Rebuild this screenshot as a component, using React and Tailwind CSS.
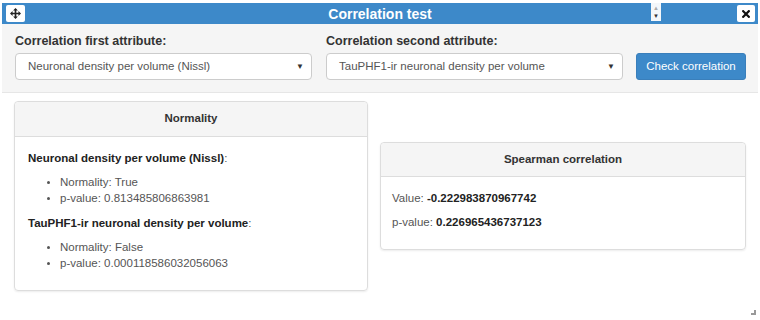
import React from "react";

const normality = [
  {
    name: "Neuronal density per volume (Nissl)",
    normal: "True",
    p: "0.813485806863981",
  },
  {
    name: "TauPHF1-ir neuronal density per volume",
    normal: "False",
    p: "0.000118586032056063",
  },
];

// Small four-way arrow (drag handle)
function MoveIcon() {
  return (
    <svg width="11" height="11" viewBox="0 0 12 12" fill="#222">
      <path d="M6 0 L8.6 2.8 H6.9 V5.1 H9.2 V3.4 L12 6 L9.2 8.6 V6.9 H6.9 V9.2 H8.6 L6 12 L3.4 9.2 H5.1 V6.9 H2.8 V8.6 L0 6 L2.8 3.4 V5.1 H5.1 V2.8 H3.4 Z" />
    </svg>
  );
}

function CloseIcon() {
  return (
    <svg width="8" height="8" viewBox="0 0 10 10">
      <path d="M1.5 1.5 L8.5 8.5 M8.5 1.5 L1.5 8.5" stroke="#111" strokeWidth="2.8" strokeLinecap="square" />
    </svg>
  );
}

function SelectBox({ value }) {
  return (
    <div className="h-[27px] flex items-center justify-between bg-white border border-[#ccc] rounded-[4px] pl-[12px] pr-[7px] text-[11.5px] text-[#555]">
      <span>{value}</span>
      <span className="text-[8px] text-[#333]">▼</span>
    </div>
  );
}

export default function App() {
  return (
    <div className="w-[760px] h-[320px] bg-white relative font-['Liberation_Sans',Arial,sans-serif] overflow-hidden">
      <div className="mx-[2px] pt-[3px]">
        {/* Title bar */}
        <div className="h-[21px] bg-[#3d89c9] relative flex items-center justify-center">
          <div className="absolute left-[4px] top-[2px] w-[19px] h-[17px] bg-white rounded-[2px] flex items-center justify-center">
            <MoveIcon />
          </div>
          <span className="text-white font-bold text-[14px] leading-none">Correlation test</span>
          <div className="absolute left-[649px] top-[0px] w-[10px] h-[18px] bg-[#f4f7fa] flex flex-col items-center justify-center gap-[2px]">
            <span className="text-[6px] leading-none text-[#aaa]">▲</span>
            <span className="text-[6px] leading-none text-[#333]">▼</span>
          </div>
          <div className="absolute right-[3px] top-[2px] w-[18px] h-[17px] bg-white rounded-[2px] flex items-center justify-center">
            <CloseIcon />
          </div>
        </div>

        {/* Attribute form */}
        <div className="bg-[#f5f5f5] border-b border-[#e6e6e6] pl-[13px] pr-[11px] pt-[10px] pb-[12px] flex items-end">
          <div className="w-[297px]">
            <div className="text-[12.5px] leading-[14px] font-bold text-[#333] mb-[5px]">Correlation first attribute:</div>
            <SelectBox value="Neuronal density per volume (Nissl)" />
          </div>
          <div className="w-[297px] ml-[14px]">
            <div className="text-[12.5px] leading-[14px] font-bold text-[#333] mb-[5px]">Correlation second attribute:</div>
            <SelectBox value="TauPHF1-ir neuronal density per volume" />
          </div>
          <button className="ml-[13px] w-[110px] h-[27px] bg-[#3d89c9] border border-[#3a7fbb] rounded-[3px] text-white text-[11.5px]">
            Check correlation
          </button>
        </div>
      </div>

      {/* Results */}
      <div className="flex items-center pl-[14px] pt-[8px]">
        <div className="w-[354px] border border-[#ddd] rounded-[4px] shadow-[0_1px_2px_rgba(0,0,0,0.08)] text-[11.5px]">
          <div className="h-[35px] bg-[#f5f5f5] border-b border-[#ddd] rounded-t-[4px] flex items-center justify-center font-bold text-[#333]">
            Normality
          </div>
          <div className="pl-[13px] pt-[14px] pb-[19px]">
            {normality.map((item, i) => (
              <div key={item.name} className={i > 0 ? "mt-[10px]" : ""}>
                <div className="leading-[14px] text-[#555]">
                  <span className="font-bold text-[#222]">{item.name}</span>:
                </div>
                <ul className="mt-[9px] pl-[32px] list-disc text-[#555] leading-[16px] marker:text-[10px]">
                  <li>Normality: {item.normal}</li>
                  <li>p-value: {item.p}</li>
                </ul>
              </div>
            ))}
          </div>
        </div>

        <div className="ml-[12px] w-[366px] border border-[#ddd] rounded-[4px] shadow-[0_1px_2px_rgba(0,0,0,0.08)] text-[11.5px]">
          <div className="h-[34px] bg-[#f5f5f5] border-b border-[#ddd] rounded-t-[4px] flex items-center justify-center font-bold text-[#333]">
            Spearman correlation
          </div>
          <div className="pl-[11px] pt-[14px] pb-[20px] text-[#555] leading-[14px]">
            <div>
              Value: <span className="font-bold text-[#222]">-0.222983870967742</span>
            </div>
            <div className="mt-[10px]">
              p-value: <span className="font-bold text-[#222]">0.226965436737123</span>
            </div>
          </div>
        </div>
      </div>

      {/* Resize grip */}
      <div className="absolute right-[4px] bottom-[5px] w-[5px] h-[5px] border-r-2 border-b-2 border-[#999]" />
    </div>
  );
}
